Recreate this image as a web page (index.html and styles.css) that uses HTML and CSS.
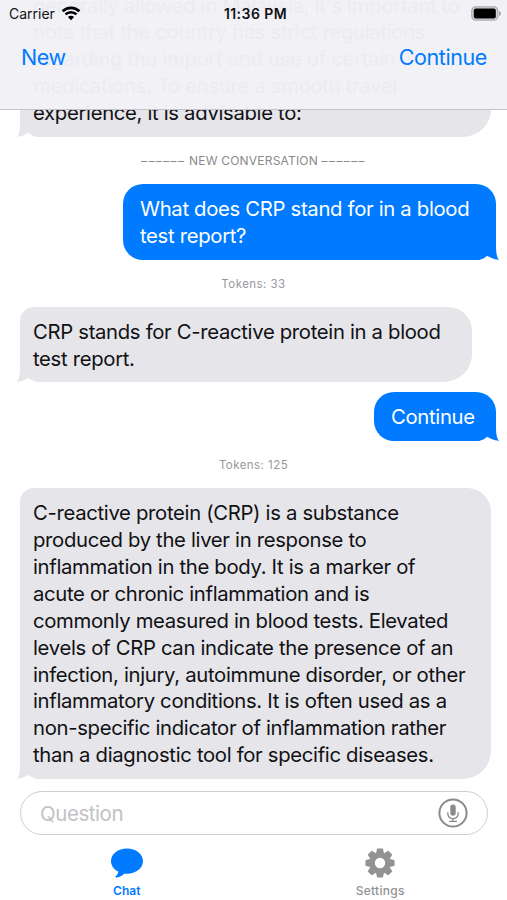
FILE: index.html
```html
<!DOCTYPE html>
<html lang="en">
<head>
<meta charset="utf-8">
<title>Chat</title>
<link rel="stylesheet" href="styles.css">
</head>
<body>

<header class="topbar">
    <div class="status">
        <div class="carrier">
            <span>Carrier</span>
            <svg width="20" height="15" viewBox="0 0 20 15" fill="none" stroke="#000">
                <path d="M1.6 5.3a12 12 0 0 1 16.8 0" stroke-width="2.7"/>
                <path d="M4.5 8.4a7.8 7.8 0 0 1 11 0" stroke-width="2.5"/>
                <path d="M10 14.2l-3.1-3.2a4.4 4.4 0 0 1 6.2 0z" fill="#000" stroke="none"/>
            </svg>
        </div>
        <div class="time">11:36 PM</div>
        <div class="power">
            <svg width="31" height="15" viewBox="0 0 31 15">
                <rect x=".8" y=".8" width="26" height="13.4" rx="4" fill="#d4d4d6" stroke="#aeaeb0" stroke-width="1.3"/>
                <rect x="2.8" y="2.6" width="22" height="9.8" rx="2" fill="#000"/>
                <path d="M28 5c2.6.8 2.6 4.2 0 5z" fill="#a4a4a6"/>
            </svg>
        </div>
    </div>
    <nav class="actions">
        <a>New</a>
        <a>Continue</a>
    </nav>
</header>

<main class="chat">
    <div class="bubble bot wide">
        generally allowed in Malaysia, it's important to<br>
        note that the country has strict regulations<br>
        regarding the import and use of certain<br>
        medications. To ensure a smooth travel<br>
        experience, it is advisable to:
        <svg class="tail" width="20" height="17" viewBox="0 0 20 17"><path class="notch" d="M0 16C5 15 9 13.800 12 11.800C14 13.800 17 15.500 20 16v1H0z"/><path d="M3 0h3v14C4 15 2 15.600 0 16C2.500 13 3 8 3 0z"/></svg>
    </div>
    <div class="note divider"><span class="dashes">&ndash;&ndash;&ndash;&ndash;&ndash;&ndash;</span> NEW CONVERSATION <span class="dashes">&ndash;&ndash;&ndash;&ndash;&ndash;&ndash;</span></div>
    <div class="bubble me">
        What does CRP stand for in a blood<br>
        test report?
        <svg class="tail" width="20" height="17" viewBox="0 0 20 17"><path class="notch" d="M0 16C5 15 9 13.800 12 11.800C14 13.800 17 15.500 20 16v1H0z"/><path d="M3 0h3v14C4 15 2 15.600 0 16C2.500 13 3 8 3 0z"/></svg>
    </div>
    <div class="note">Tokens: 33</div>
    <div class="bubble bot short">
        CRP stands for C-reactive protein in a blood<br>
        test report.
        <svg class="tail" width="20" height="17" viewBox="0 0 20 17"><path class="notch" d="M0 16C5 15 9 13.800 12 11.800C14 13.800 17 15.500 20 16v1H0z"/><path d="M3 0h3v14C4 15 2 15.600 0 16C2.500 13 3 8 3 0z"/></svg>
    </div>
    <div class="bubble me reply">
        Continue
        <svg class="tail" width="20" height="17" viewBox="0 0 20 17"><path class="notch" d="M0 16C5 15 9 13.800 12 11.800C14 13.800 17 15.500 20 16v1H0z"/><path d="M3 0h3v14C4 15 2 15.600 0 16C2.500 13 3 8 3 0z"/></svg>
    </div>
    <div class="note">Tokens: 125</div>
    <div class="bubble bot wide">
        C-reactive protein (CRP) is a substance<br>
        produced by the liver in response to<br>
        inflammation in the body. It is a marker of<br>
        acute or chronic inflammation and is<br>
        commonly measured in blood tests. Elevated<br>
        levels of CRP can indicate the presence of an<br>
        infection, injury, autoimmune disorder, or other<br>
        inflammatory conditions. It is often used as a<br>
        non-specific indicator of inflammation rather<br>
        than a diagnostic tool for specific diseases.
        <svg class="tail" width="20" height="17" viewBox="0 0 20 17"><path class="notch" d="M0 16C5 15 9 13.800 12 11.800C14 13.800 17 15.500 20 16v1H0z"/><path d="M3 0h3v14C4 15 2 15.600 0 16C2.500 13 3 8 3 0z"/></svg>
    </div>
</main>

<div class="ask">
    <span>Question</span>
    <svg width="30" height="30" viewBox="0 0 30 30" fill="none" stroke="#8a8a8e">
        <circle cx="15" cy="15" r="13.6" stroke-width="2"/>
        <rect x="12.300" y="6.500" width="5.400" height="11.200" rx="2.700" fill="#8a8a8e" stroke="none"/>
        <path d="M9.800 14.200v1.300a5.200 5.200 0 0 0 10.400 0v-1.300M15 20.700v2.500M11 23.300h8" stroke-width="1.300"/>
    </svg>
</div>

<nav class="tabs">
    <a class="tab active">
        <svg width="34" height="30" viewBox="0 0 34 30" fill="#007aff">
            <path d="M17 .5C8 .5 1 6 1 13c0 4.600 2.800 8.400 7.300 10.600c-.2 2-1.200 3.600-2.600 4.700c-.5.600-.2 1.200.6 1.200c3.100-.2 5.900-1.700 7.800-3.800c.9.100 2 .1 2.900.1c9 0 16-5.600 16-12.700S26 .5 17 .5z"/>
        </svg>
        <span>Chat</span>
    </a>
    <a class="tab">
        <svg width="30" height="30" viewBox="-15 -15 30 30">
            <g fill="#929292" stroke="#929292" stroke-width="1.500" stroke-linejoin="round">
                <path id="tooth" d="M-2.300 -13.800h4.600l1.100 5h-6.800z"/>
                <use href="#tooth" transform="rotate(45)"/>
                <use href="#tooth" transform="rotate(90)"/>
                <use href="#tooth" transform="rotate(135)"/>
                <use href="#tooth" transform="rotate(180)"/>
                <use href="#tooth" transform="rotate(225)"/>
                <use href="#tooth" transform="rotate(270)"/>
                <use href="#tooth" transform="rotate(315)"/>
            </g>
            <circle r="7.900" fill="none" stroke="#929292" stroke-width="5.400"/>
        </svg>
        <span>Settings</span>
    </a>
</nav>

</body>
</html>
```

FILE: styles.css
```css
body {
    margin: 0;
    height: 900px;
    display: flex;
    flex-direction: column;
    overflow: hidden;
    background: #fff;
    font-family: Inter, "Liberation Sans", sans-serif;
    color: #111114;
}
.topbar {
    position: absolute;
    top: 0;
    left: 0;
    right: 0;
    z-index: 2;
    height: 109px;
    border-bottom: 1px solid #c4c4c8;
    background: rgba(241, 241, 246, 0.975);
}
.status {
    display: grid;
    grid-template-columns: 1fr auto 1fr;
    align-items: center;
    height: 27px;
    padding: 0 5px 0 9px;
    font-size: 14px;
}
.carrier {
    display: flex;
    align-items: center;
    gap: 6px;
}
.time {
    font-weight: 600;
    letter-spacing: 0.45px;
}
.power {
    display: flex;
    justify-content: flex-end;
}
.actions {
    display: flex;
    justify-content: space-between;
    padding: 16px 20px 0 21px;
    font-size: 21.5px;
    line-height: 28px;
    letter-spacing: -0.4px;
    color: #007aff;
}
.chat {
    display: flex;
    flex-direction: column;
    justify-content: flex-end;
    align-items: flex-start;
    box-sizing: border-box;
    height: 779px;
    overflow: hidden;
}
.bubble {
    position: relative;
    flex: none;
    box-sizing: border-box;
    font-size: 20.3px;
    line-height: 26.88px;
    letter-spacing: -0.32px;
    white-space: nowrap;
}
.bot {
    margin-left: 20px;
    padding: 12px 13px 10px;
    background: #e5e5ea;
    border-radius: 14px 24px 28px 0;
}
.wide {
    width: 471px;
}
.short {
    width: 452px;
}
.me {
    align-self: flex-end;
    margin-right: 11px;
    width: 373px;
    padding: 12px 17px 10px;
    background: #007aff;
    border-radius: 20px 20px 0 20px;
    color: #fff;
}
.reply {
    width: 122px;
    margin-top: 10px;
}
.tail {
    position: absolute;
    left: -3px;
    bottom: -1px;
    fill: #e5e5ea;
}
.me .tail {
    left: auto;
    right: -3px;
    transform: scaleX(-1);
    fill: #007aff;
}
.tail .notch {
    fill: #fff;
}
.note {
    flex: none;
    align-self: center;
    height: 47px;
    line-height: 48px;
    font-size: 11.5px;
    letter-spacing: 0.45px;
    color: #98989c;
}
.divider {
    line-height: 47px;
    font-size: 12px;
    letter-spacing: 0.2px;
    color: #8a8a8e;
}
.dashes {
    letter-spacing: 1.4px;
}
.ask {
    display: flex;
    align-items: center;
    justify-content: space-between;
    box-sizing: border-box;
    height: 44px;
    margin: 12px 19px 0 20px;
    padding: 0 19px;
    border: 1.5px solid #cfcfd2;
    border-radius: 22px;
    font-size: 20.5px;
    letter-spacing: -0.45px;
    color: #c2c2c5;
}
.tabs {
    display: flex;
    padding-top: 13px;
}
.tab {
    flex: 1;
    display: flex;
    flex-direction: column;
    align-items: center;
    gap: 5px;
    font-size: 12px;
    font-weight: 500;
    line-height: 15px;
    letter-spacing: 0.3px;
    color: #929292;
}
.active {
    font-weight: 600;
    letter-spacing: 0;
    color: #007aff;
}
```
